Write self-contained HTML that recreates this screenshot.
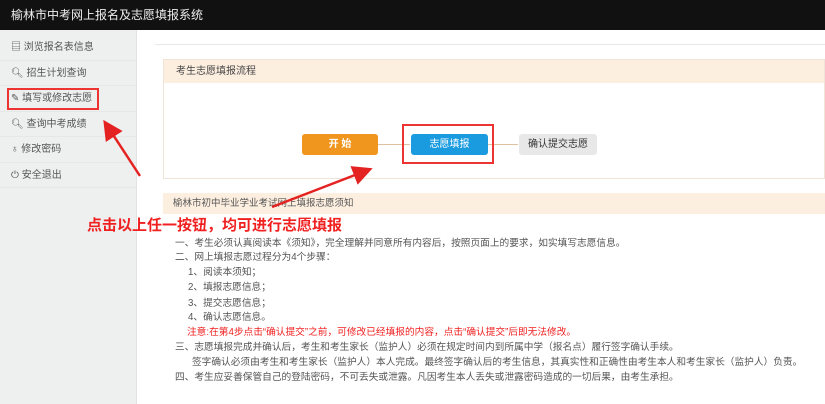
<!DOCTYPE html><html><head><meta charset="utf-8"><style>
*{margin:0;padding:0;box-sizing:border-box}
body{width:825px;height:404px;overflow:hidden;background:#fff;font-family:"Liberation Sans","Noto Sans CJK SC",sans-serif;position:relative;color:#444}
.top{position:absolute;left:0;top:0;width:825px;height:30px;background:#111;color:#eee;font-size:12px;line-height:30px;padding-left:11px}
.side{position:absolute;left:0;top:30px;width:137px;height:374px;background:#eef0f0;border-right:1px solid #e2e4e4}
.side div{height:25.5px;line-height:25px;font-size:10px;padding-left:11px;border-bottom:1px solid #e6e8e8;color:#555}
.hl{position:absolute;left:155px;top:44px;width:670px;height:1px;background:#e8e8e8}
.p1{position:absolute;left:163px;top:59px;width:662px;height:120px;border:1px solid #f0e4d8}
.ph{background:#fdefe0;height:23px;line-height:23px;font-size:10px;padding-left:12px;color:#444}
.btn{position:absolute;top:134px;height:21px;line-height:21px;font-size:10px;text-align:center;border-radius:3px}
.ln{position:absolute;top:144px;height:1px;background:#e0c0a0}
.box{position:absolute;border:2px solid #e33}
.p2h{position:absolute;left:163px;top:193px;width:662px;height:21px;background:#fdefe0;font-size:9.5px;line-height:21px;padding-left:10px;color:#555}
.tx{position:absolute;left:175px;font-size:9.7px;line-height:12px;color:#555;white-space:nowrap}
.red{position:absolute;left:87px;top:214px;font-size:15px;font-weight:bold;color:#f02020}
</style></head><body>
<div class="top">榆林市中考网上报名及志愿填报系统</div>
<div class="side" style="padding-top:5px">
<div>▤ 浏览报名表信息</div><div>🔍︎ 招生计划查询</div><div>✎ 填写或修改志愿</div><div>🔍︎ 查询中考成绩</div><div>♁ 修改密码</div><div>⏻ 安全退出</div></div>
<div class="box" style="left:7px;top:88px;width:92px;height:22px"></div>
<div class="hl"></div>
<div class="p1"><div class="ph">考生志愿填报流程</div></div>
<div class="ln" style="left:370px;width:40px"></div>
<div class="ln" style="left:480px;width:38px"></div>
<div class="btn" style="left:302px;width:76px;background:#f0961e;color:#fff;font-weight:bold">开 始</div>
<div class="btn" style="left:411px;width:77px;background:#1a9be0;color:#fff">志愿填报</div>
<div class="btn" style="left:519px;width:78px;background:#e8e8e8;color:#333">确认提交志愿</div>
<div class="box" style="left:402px;top:124px;width:92px;height:40px"></div>
<div class="p2h">榆林市初中毕业学业考试网上填报志愿须知</div>
<div class="red">点击以上任一按钮，均可进行志愿填报</div>
<div class="tx" style="top:238px">一、考生必须认真阅读本《须知》，完全理解并同意所有内容后，按照页面上的要求，如实填写志愿信息。</div>
<div class="tx" style="top:252px">二、网上填报志愿过程分为4个步骤：</div>
<div class="tx" style="top:267px;left:188px">1、阅读本须知；</div>
<div class="tx" style="top:282px;left:188px">2、填报志愿信息；</div>
<div class="tx" style="top:298px;left:188px">3、提交志愿信息；</div>
<div class="tx" style="top:312px;left:188px">4、确认志愿信息。</div>
<div class="tx" style="top:327px;left:187px;color:#f02020">注意:在第4步点击“确认提交”之前，可修改已经填报的内容，点击“确认提交”后即无法修改。</div>
<div class="tx" style="top:342px">三、志愿填报完成并确认后，考生和考生家长（监护人）必须在规定时间内到所属中学（报名点）履行签字确认手续。</div>
<div class="tx" style="top:357px;left:192px">签字确认必须由考生和考生家长（监护人）本人完成。最终签字确认后的考生信息，其真实性和正确性由考生本人和考生家长（监护人）负责。</div>
<div class="tx" style="top:372px">四、考生应妥善保管自己的登陆密码，不可丢失或泄露。凡因考生本人丢失或泄露密码造成的一切后果，由考生承担。</div>
<svg style="position:absolute;left:0;top:0" width="825" height="404"><defs><marker id="a" markerWidth="8" markerHeight="8" refX="6" refY="4" orient="auto"><path d="M0,0L8,4L0,8z" fill="#e52222"/></marker></defs>
<line x1="140" y1="176" x2="106" y2="124" stroke="#e52222" stroke-width="2.5" marker-end="url(#a)"/>
<line x1="272" y1="207" x2="368" y2="170" stroke="#e52222" stroke-width="2.5" marker-end="url(#a)"/></svg>
</body></html>
